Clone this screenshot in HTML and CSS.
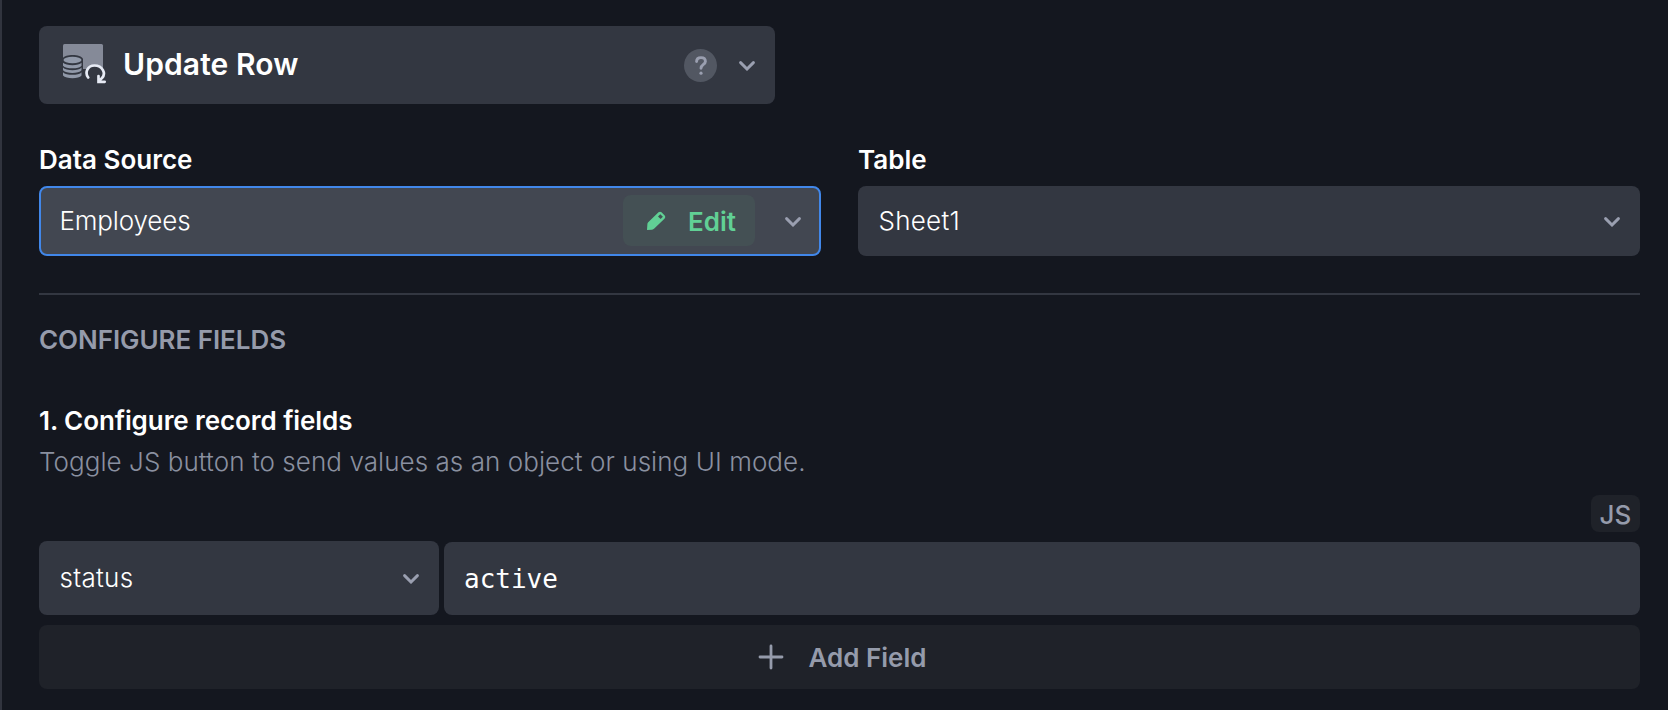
FILE: index.html
```html
<!DOCTYPE html>
<html lang="en">
<head>
<meta charset="utf-8">
<title>Update Row</title>
<link rel="stylesheet" href="styles.css">
</head>
<body>
<svg class="defs" width="0" height="0" aria-hidden="true">
  <symbol id="chevron" viewBox="0 0 16 10"><path d="M1.6 1.6 8 8 14.4 1.6" fill="none" stroke="currentColor" stroke-width="2.9" stroke-linecap="round" stroke-linejoin="miter"/></symbol>
</svg>
<main class="panel">
  <header class="action">
    <svg class="action-icon" viewBox="0 0 44 40">
      <path d="M1.500 0H38.500Q40 0 40 1.500V25H0V1.500Q0 0 1.500 0Z" fill="#858a98"/>
      <path d="M0 14C2 10 18 9.500 20 15V35H0Z" fill="#333741"/>
      <ellipse cx="9.500" cy="16" rx="9" ry="3.200" fill="#9199a9"/>
      <g fill="#9199a9">
        <path d="M0 18.700C3 22 16 22 18.500 18.700V21.700C16 25.200 3 25.200 0 21.700Z"/>
        <path d="M0 23.500C3 27 16 27 18.500 23.500V26.300C16 29.800 3 29.800 0 26.300Z"/>
        <path d="M0 28.200C3 31.700 16 31.700 18.500 28.200V31.500C16 35 3 35 0 31.500Z"/>
      </g>
      <path d="M22.500 25.500H40V30L36.500 35.500H26Q22.500 31 22.500 25.500Z" fill="#333741"/>
      <path d="M23.500 26C25 20.500 37 20 39.500 26Z" fill="#333741"/>
      <path d="M25.200 33.500C21.500 28.500 24.500 21.500 31.500 21.500C39.500 21.500 43.500 29.500 38.800 34.200L36 37.200M35.500 32V37.800H41.700" fill="none" stroke="#e6eaf4" stroke-width="2.700" stroke-linecap="round"/>
    </svg>
    <h1 class="action-title">Update Row</h1>
    <span class="help"><svg viewBox="0 0 12 19" width="12" height="19"><path d="M1.600 5.600C1.600 3 3.300 1.600 6 1.600S10.400 3.200 10.400 5.400C10.400 8.500 6 8.300 6 12.300" fill="none" stroke="#9a9fb0" stroke-width="2.900" stroke-linecap="round"/><circle cx="6" cy="17.200" r="1.600" fill="#9a9fb0"/></svg></span>
    <svg class="chevron"><use href="#chevron"/></svg>
  </header>

  <section class="sources">
    <div class="field">
      <label class="label">Data Source</label>
      <div class="select focused">
        <span class="value employees">Employees</span>
        <button class="edit">
          <svg viewBox="0 0 20 20" width="20" height="20"><path fill-rule="evenodd" d="M1 19 1.400 13Q1.500 12 2.200 11.300L12.500 1.300Q14 0 15.500 1.300L18.700 4.500Q20 6 18.700 7.500L8.300 17.600Q7.300 18.700 6 18.800ZM14.300 3.200 12 5.500 14.600 8.100 16.900 5.800Z" fill="#61d095"/></svg>
          <span>Edit</span>
        </button>
        <svg class="chevron"><use href="#chevron"/></svg>
      </div>
    </div>
    <div class="field">
      <label class="label">Table</label>
      <div class="select">
        <span class="value sheet">Sheet1</span>
        <svg class="chevron"><use href="#chevron"/></svg>
      </div>
    </div>
  </section>

  <section class="configure">
    <h2 class="section-title">CONFIGURE FIELDS</h2>
    <h3 class="label step">1. Configure record fields</h3>
    <p class="hint">Toggle JS button to send values as an object or using UI mode.</p>
    <button class="js">JS</button>
    <div class="record">
      <div class="select key">
        <span class="value status">status</span>
        <svg class="chevron"><use href="#chevron"/></svg>
      </div>
      <div class="input">active</div>
    </div>
    <button class="add">
      <svg viewBox="0 0 26 26" width="26" height="26"><path d="M13 2V24M2 13H24" stroke="#959bab" stroke-width="2.800" stroke-linecap="round"/></svg>
      <span>Add Field</span>
    </button>
  </section>
</main>
</body>
</html>
```
FILE: styles.css
```css
* { box-sizing: border-box; }
body {
  margin: 0;
  background: #14171f;
  color: #fff;
  font-family: Inter, sans-serif;
  font-size: 26px;
}
h1, h2, h3, p { margin: 0; }
button { border: 0; margin: 0; font: inherit; white-space: nowrap; }
.defs { display: block; position: absolute; }
.panel {
  height: 710px;
  overflow: hidden;
  border-left: 2px solid #31343e;
  padding: 26px 28px 0 37px;
}
.chevron { flex: none; display: block; width: 16px; height: 10px; margin-top: 1px; color: #9a9fb0; }

.action {
  display: flex;
  align-items: center;
  width: 736px;
  height: 78px;
  padding: 0 20px 0 24px;
  border-radius: 8px;
  background: #333741;
}
.action-icon { flex: none; width: 44px; height: 40px; margin-top: -2px; }
.action-title {
  flex: 1;
  margin: -3px 0 0 16px;
  font-size: 30px;
  font-weight: 600;
  letter-spacing: 0.1px;
  line-height: 36px;
}
.help {
  display: flex;
  align-items: center;
  justify-content: center;
  width: 33px;
  height: 33px;
  margin-right: 22px;
  border-radius: 50%;
  background: #525762;
}

.sources {
  display: grid;
  grid-template-columns: 1fr 1fr;
  gap: 37px;
  padding: 40px 0 37px;
  border-bottom: 2px solid #333741;
}
.label { display: block; font-weight: 600; line-height: 32px; white-space: nowrap; }
.field .label { margin-bottom: 10px; }
.select {
  display: flex;
  align-items: center;
  height: 70px;
  padding: 0 20px 0 20.5px;
  border-radius: 8px;
  background: #333741;
}
.value { flex: 1; font-weight: 300; line-height: 32px; }
.employees { letter-spacing: -0.15px; }
.sheet { letter-spacing: 0.25px; }
.status { letter-spacing: 0.3px; }
.focused { padding: 0 18px 0 18.5px; border: 2px solid #4187e9; background: #424751; }
.edit {
  display: flex;
  align-items: center;
  gap: 22px;
  width: 132px;
  height: 51px;
  margin: -1px 30px 0 0;
  padding: 1px 0 0 23px;
  border-radius: 8px;
  background: #445054;
  color: #61d095;
  font-weight: 600;
}

.section-title {
  margin-top: 29px;
  color: #959bab;
  font-size: 26px;
  font-weight: 600;
  letter-spacing: -0.05px;
  line-height: 32px;
}
.step { margin-top: 49px; font-size: 26px; letter-spacing: -0.08px; }
.hint {
  margin-top: 9px;
  color: #8a90a0;
  font-weight: 300;
  letter-spacing: 0.06px;
  line-height: 32px;
  white-space: nowrap;
}
.js {
  display: block;
  width: 49px;
  height: 37px;
  margin: 17px 0 9px auto;
  padding: 1px 0 0;
  border-radius: 8px;
  background: #1f2229;
  color: #959bab;
  font-weight: 500;
  line-height: 37px;
}
.record { display: flex; align-items: flex-end; gap: 5px; }
.key { width: 400px; height: 74px; }
.input {
  flex: 1;
  height: 73px;
  padding-left: 20px;
  border-radius: 8px;
  background: #333741;
  font-family: "DejaVu Sans Mono", monospace;
  line-height: 75px;
}
.add {
  display: flex;
  align-items: center;
  justify-content: center;
  gap: 24px;
  width: 100%;
  height: 64px;
  margin-top: 10px;
  padding: 0 0 0 6px;
  border-radius: 8px;
  background: #1f2229;
  color: #959bab;
  font-weight: 600;
}
```
